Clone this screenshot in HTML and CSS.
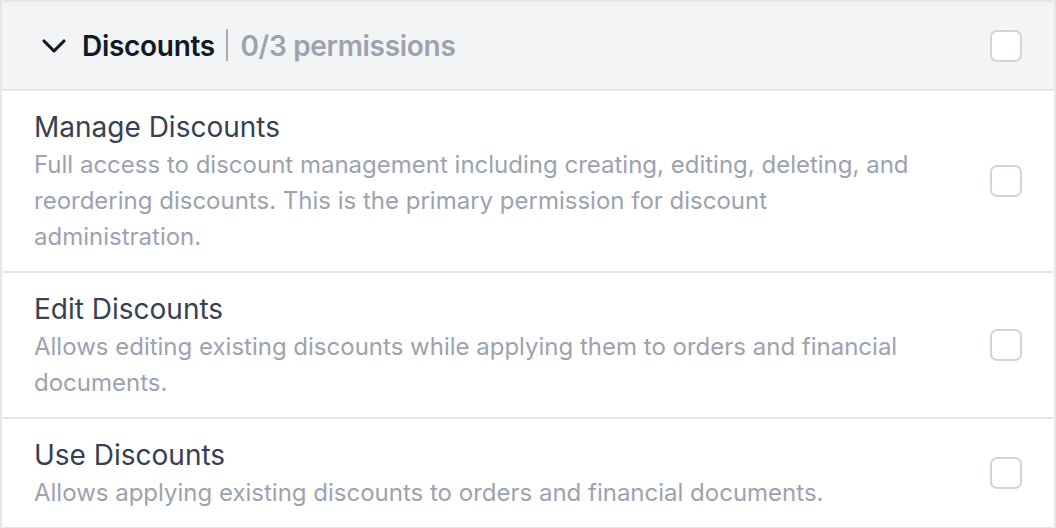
FILE: index.html
```html
<!DOCTYPE html>
<html lang="en">
<head>
<meta charset="utf-8">
<title>Discounts permissions</title>
<link rel="stylesheet" href="styles.css">
</head>
<body>
<section class="group">
  <header class="group-head">
    <div class="head-left">
      <svg class="chevron" viewBox="0 0 24 24" fill="none" stroke="currentColor" stroke-width="2" stroke-linecap="round" stroke-linejoin="round"><path d="m6 9 6 6 6-6"/></svg>
      <span class="group-title">Discounts</span>
      <span class="sep"></span>
      <span class="group-count">0/3 permissions</span>
    </div>
    <span class="checkbox"></span>
  </header>
  <div class="perm">
    <div class="perm-text">
      <div class="perm-title">Manage Discounts</div>
      <div class="perm-desc">Full access to discount management including creating, editing, deleting, and reordering discounts. This is the primary permission for discount administration.</div>
    </div>
    <span class="checkbox"></span>
  </div>
  <div class="perm">
    <div class="perm-text">
      <div class="perm-title">Edit Discounts</div>
      <div class="perm-desc">Allows editing existing discounts while applying them to orders and financial documents.</div>
    </div>
    <span class="checkbox"></span>
  </div>
  <div class="perm">
    <div class="perm-text">
      <div class="perm-title">Use Discounts</div>
      <div class="perm-desc">Allows applying existing discounts to orders and financial documents.</div>
    </div>
    <span class="checkbox"></span>
  </div>
</section>
</body>
</html>
```
FILE: styles.css
```css
html, body {
  margin: 0;
  padding: 0;
  background: #ffffff;
}
body {
  font-family: Inter, "Noto Sans", "Liberation Sans", sans-serif;
  width: 1056px;
}
.group {
  border: 2px solid #e5e7eb;
  border-bottom: none;
}
.group-head {
  display: flex;
  align-items: center;
  justify-content: space-between;
  background: #f3f4f6;
  padding: 24px 32px 23px 32px;
  border-bottom: 2px solid #e5e7eb;
}
.head-left {
  display: flex;
  align-items: center;
  gap: 8px;
}
.chevron {
  width: 40px;
  height: 40px;
  color: #111827;
  flex-shrink: 0;
  stroke-width: 1.9;
}
.group-title {
  font-size: 28px;
  line-height: 40px;
  font-weight: 600;
  letter-spacing: -0.3px;
  color: #111827;
}
.sep {
  display: block;
  width: 2.5px;
  height: 32px;
  background: #a7adb7;
  margin: -2px 4px 0 3px;
}
.group-count {
  font-size: 28px;
  line-height: 40px;
  font-weight: 600;
  letter-spacing: -0.3px;
  color: #9ca3af;
}
.checkbox {
  display: block;
  width: 28px;
  height: 28px;
  border: 2px solid #d1d5db;
  border-radius: 7px;
  background: #ffffff;
  flex-shrink: 0;
}
.perm {
  display: flex;
  align-items: center;
  gap: 64px;
  padding: 16px 32px;
  border-bottom: 2px solid #e5e7eb;
}
.perm-text {
  flex: 1;
  min-width: 0;
}
.perm-title {
  font-size: 28px;
  line-height: 40px;
  font-weight: 400;
  color: #374151;
}
.perm-desc {
  font-size: 24px;
  line-height: 36px;
  color: #9ca3af;
}
```
